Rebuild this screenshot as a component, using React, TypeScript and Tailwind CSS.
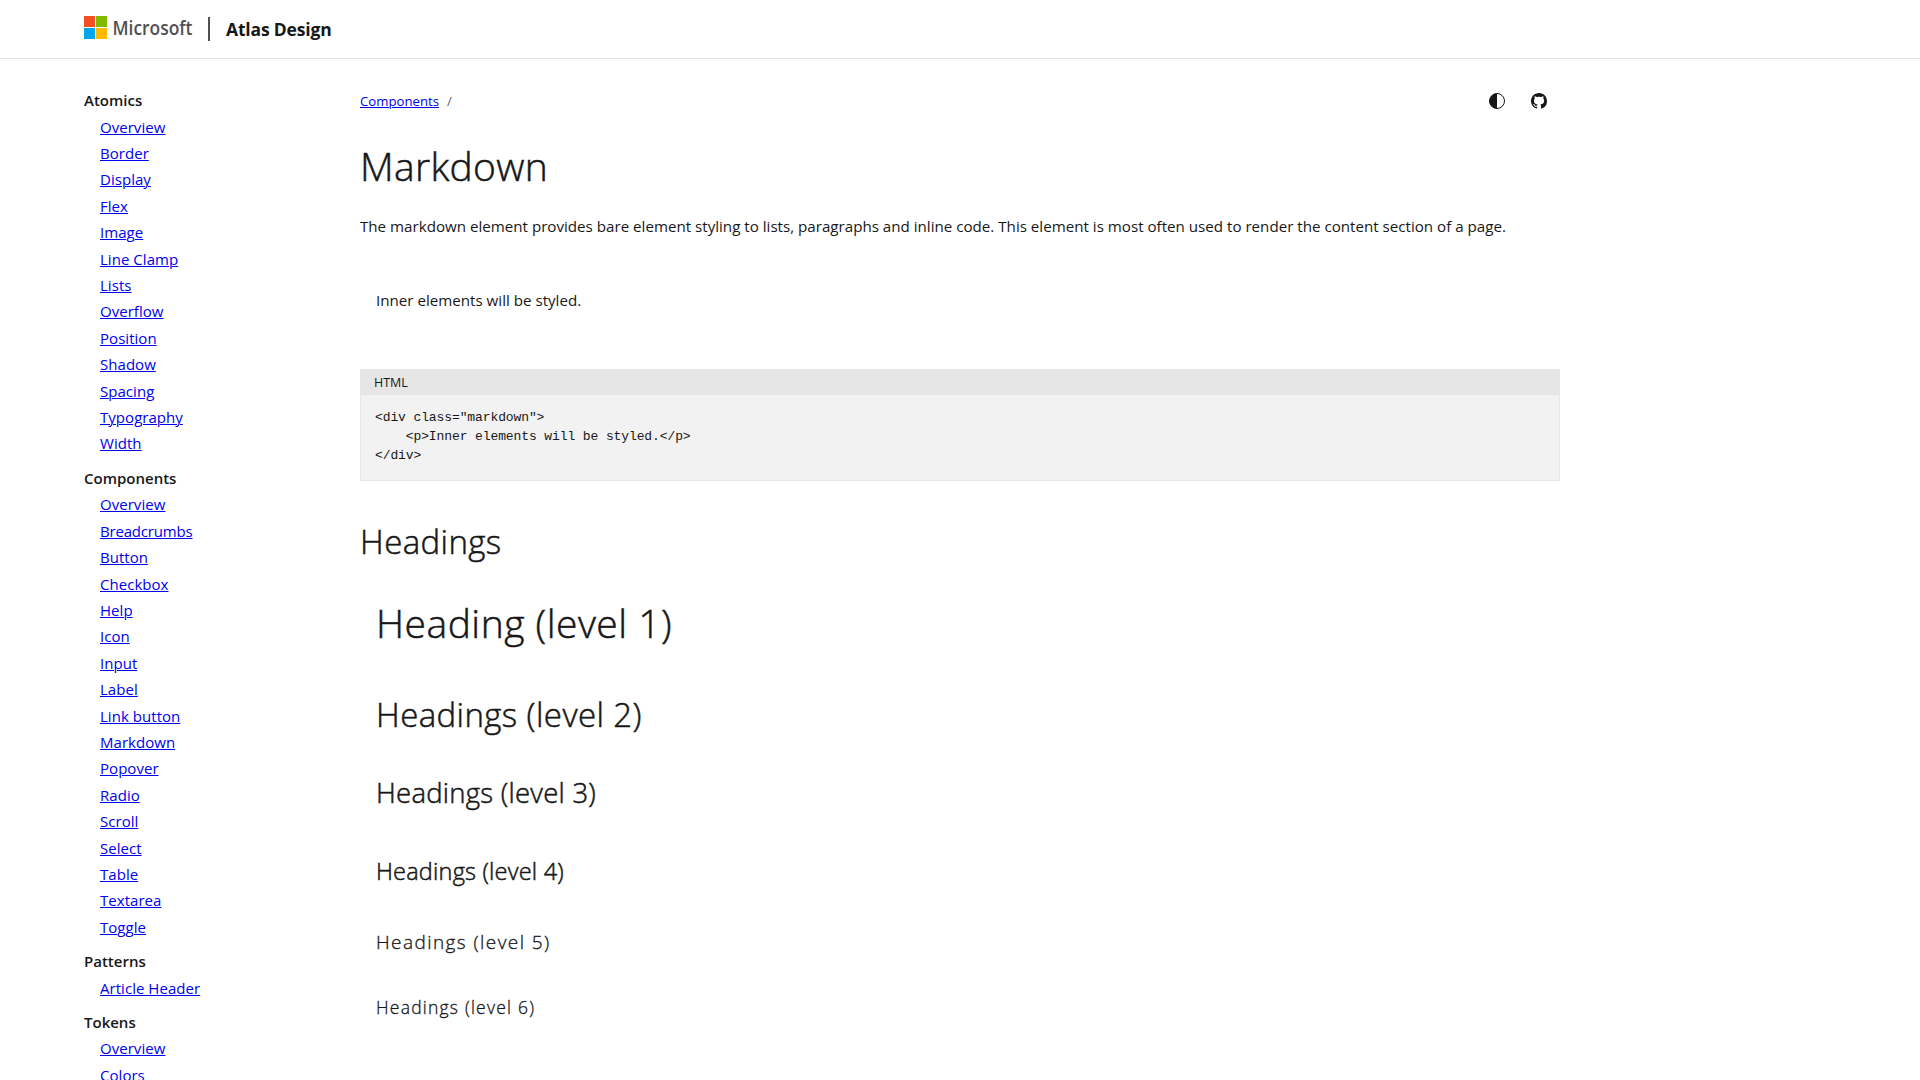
import React from "react";

type NavItem = { label: string; tracking?: string };
type NavGroup = { title: string; items: NavItem[] };

const nav: NavGroup[] = [
  {
    title: "Atomics",
    items: [
      { label: "Overview" },
      { label: "Border" },
      { label: "Display" },
      { label: "Flex" },
      { label: "Image" },
      { label: "Line Clamp" },
      { label: "Lists" },
      { label: "Overflow" },
      { label: "Position" },
      { label: "Shadow" },
      { label: "Spacing" },
      { label: "Typography" },
      { label: "Width" },
    ],
  },
  {
    title: "Components",
    items: [
      { label: "Overview" },
      { label: "Breadcrumbs", tracking: "tracking-[-0.18px]" },
      { label: "Button" },
      { label: "Checkbox" },
      { label: "Help" },
      { label: "Icon" },
      { label: "Input" },
      { label: "Label" },
      { label: "Link button" },
      { label: "Markdown" },
      { label: "Popover" },
      { label: "Radio" },
      { label: "Scroll" },
      { label: "Select" },
      { label: "Table" },
      { label: "Textarea" },
      { label: "Toggle" },
    ],
  },
  { title: "Patterns", items: [{ label: "Article Header" }] },
  { title: "Tokens", items: [{ label: "Overview" }, { label: "Colors" }] },
];

const code = `<div class="markdown">
    <p>Inner elements will be styled.</p>
</div>`;

const linkClass = "text-[#0000ee] underline decoration-1 underline-offset-[1px]";
const headingClass = "font-light [-webkit-text-stroke:0.5px_#171717]";
const smallHeadingClass = "font-light [-webkit-text-stroke:0.3px_#171717]";

function MicrosoftLogo() {
  return (
    <svg width="110" height="24" viewBox="0 0 110 24" className="block overflow-visible" role="img" aria-label="Microsoft">
      <rect x="0" y="0" width="11" height="11" fill="#f25022" />
      <rect x="12" y="0" width="11" height="11" fill="#7fba00" />
      <rect x="0" y="12" width="11" height="11" fill="#00a4ef" />
      <rect x="12" y="12" width="11" height="11" fill="#ffb900" />
      <text
        x="28.5"
        y="18.5"
        fill="#505050"
        fontSize="19.5"
        fontWeight="600"
        textLength="80"
        lengthAdjust="spacingAndGlyphs"
      >
        Microsoft
      </text>
    </svg>
  );
}

function Header() {
  return (
    <header className="flex h-[59px] items-start border-b border-[#e3e3e3] pl-[84px]">
      <div className="pt-4">
        <MicrosoftLogo />
      </div>
      <div className="mt-[17px] ml-[14px] h-6 w-[2px] bg-[#505050]" />
      <span className="mt-[17px] ml-4 text-[17.5px] leading-6 font-bold tracking-[-0.17px]">Atlas Design</span>
    </header>
  );
}

function Sidebar() {
  return (
    <nav className="w-[276px] shrink-0 pt-[28.2px] text-[15px] leading-[26.4px]">
      {nav.map((group) => (
        <section key={group.title} className="mb-2">
          <h2 className="font-semibold">{group.title}</h2>
          <ul className="pl-4">
            {group.items.map((item) => (
              <li key={item.label}>
                <a className={`${linkClass} ${item.tracking ?? "tracking-[0.04px]"}`}>{item.label}</a>
              </li>
            ))}
          </ul>
        </section>
      ))}
    </nav>
  );
}

function ContrastIcon() {
  return (
    <svg width="16" height="16" viewBox="0 0 16 16" fill="none">
      <circle cx="8" cy="8" r="7.5" stroke="#171717" strokeWidth="1" />
      <path d="M8 .5a7.5 7.5 0 0 0 0 15z" fill="#171717" />
    </svg>
  );
}

function GithubIcon() {
  return (
    <svg width="16" height="16" viewBox="0 0 16 16" fill="#171717">
      <path d="M8 0C3.58 0 0 3.58 0 8c0 3.54 2.29 6.53 5.47 7.59.4.07.55-.17.55-.38 0-.19-.01-.82-.01-1.49-2.01.37-2.53-.49-2.69-.94-.09-.23-.48-.94-.82-1.13-.28-.15-.68-.52-.01-.53.63-.01 1.08.58 1.23.82.72 1.21 1.87.87 2.33.66.07-.52.28-.87.51-1.07-1.78-.2-3.64-.89-3.64-3.95 0-.87.31-1.59.82-2.15-.08-.2-.36-1.02.08-2.12 0 0 .67-.21 2.2.82.64-.18 1.32-.27 2-.27s1.36.09 2 .27c1.53-1.04 2.2-.82 2.2-.82.44 1.1.16 1.92.08 2.12.51.56.82 1.27.82 2.15 0 3.07-1.87 3.75-3.65 3.95.29.25.54.73.54 1.48 0 1.07-.01 1.93-.01 2.2 0 .21.15.46.55.38A8.01 8.01 0 0 0 16 8c0-4.42-3.58-8-8-8z" />
    </svg>
  );
}

export default function App() {
  return (
    <div className="h-screen overflow-hidden bg-white font-['Open_Sans','Noto_Sans',sans-serif] text-[#171717]">
      <Header />
      <div className="flex pl-[84px]">
        <Sidebar />
        <main className="w-[1200px] pt-8">
          <div className="flex h-5 items-center justify-between pr-[13px] text-[13.2px] leading-5">
            <div className="flex">
              <a className={linkClass}>Components</a>
              <span className="ml-2 text-[#616161]">/</span>
            </div>
            <div className="flex gap-[26px]">
              <ContrastIcon />
              <GithubIcon />
            </div>
          </div>

          <h1 className={`mt-[31px] text-[39px] leading-[48px] tracking-[0.3px] ${headingClass}`}>Markdown</h1>
          <p className="mt-6 text-[15.15px] leading-6 whitespace-nowrap">
            The markdown element provides bare element styling to lists, paragraphs and inline code. This element is
            most often used to render the content section of a page.
          </p>
          <p className="mt-[50px] pl-4 text-[15.15px] leading-6">Inner elements will be styled.</p>

          <div className="mt-[57px] h-28 border border-[#e6e6e6] bg-[#f2f2f2]">
            <div className="h-[25px] bg-[#e6e6e6] pl-[13px] text-[12.5px] leading-[25px]">HTML</div>
            <pre className="pt-[13px] pl-[14px] font-['Liberation_Mono',monospace] text-[13px] leading-[19px] tracking-[-0.105px]">
              {code}
            </pre>
          </div>

          <h2 className={`mt-[39px] text-[33px] leading-[44px] tracking-[0.4px] ${headingClass}`}>Headings</h2>
          <div className="pl-4">
            <h1 className={`mt-[35px] text-[39px] leading-[48px] tracking-[0.5px] ${headingClass}`}>
              Heading (level 1)
            </h1>
            <h2 className={`mt-[46px] text-[33px] leading-[44px] tracking-[0.4px] ${headingClass}`}>
              Headings (level 2)
            </h2>
            <h3 className={`mt-[38px] text-[27.5px] leading-9 tracking-[0.25px] ${headingClass}`}>
              Headings (level 3)
            </h3>
            <h4 className={`mt-11 text-[23.5px] leading-8 tracking-[0.2px] ${headingClass}`}>Headings (level 4)</h4>
            <h5 className={`mt-[41px] text-[19px] leading-7 tracking-[1.43px] ${smallHeadingClass}`}>
              Headings (level 5)
            </h5>
            <h6 className={`mt-[38px] text-[17.5px] leading-[26px] tracking-[1.22px] ${smallHeadingClass}`}>
              Headings (level 6)
            </h6>
          </div>
        </main>
      </div>
    </div>
  );
}
